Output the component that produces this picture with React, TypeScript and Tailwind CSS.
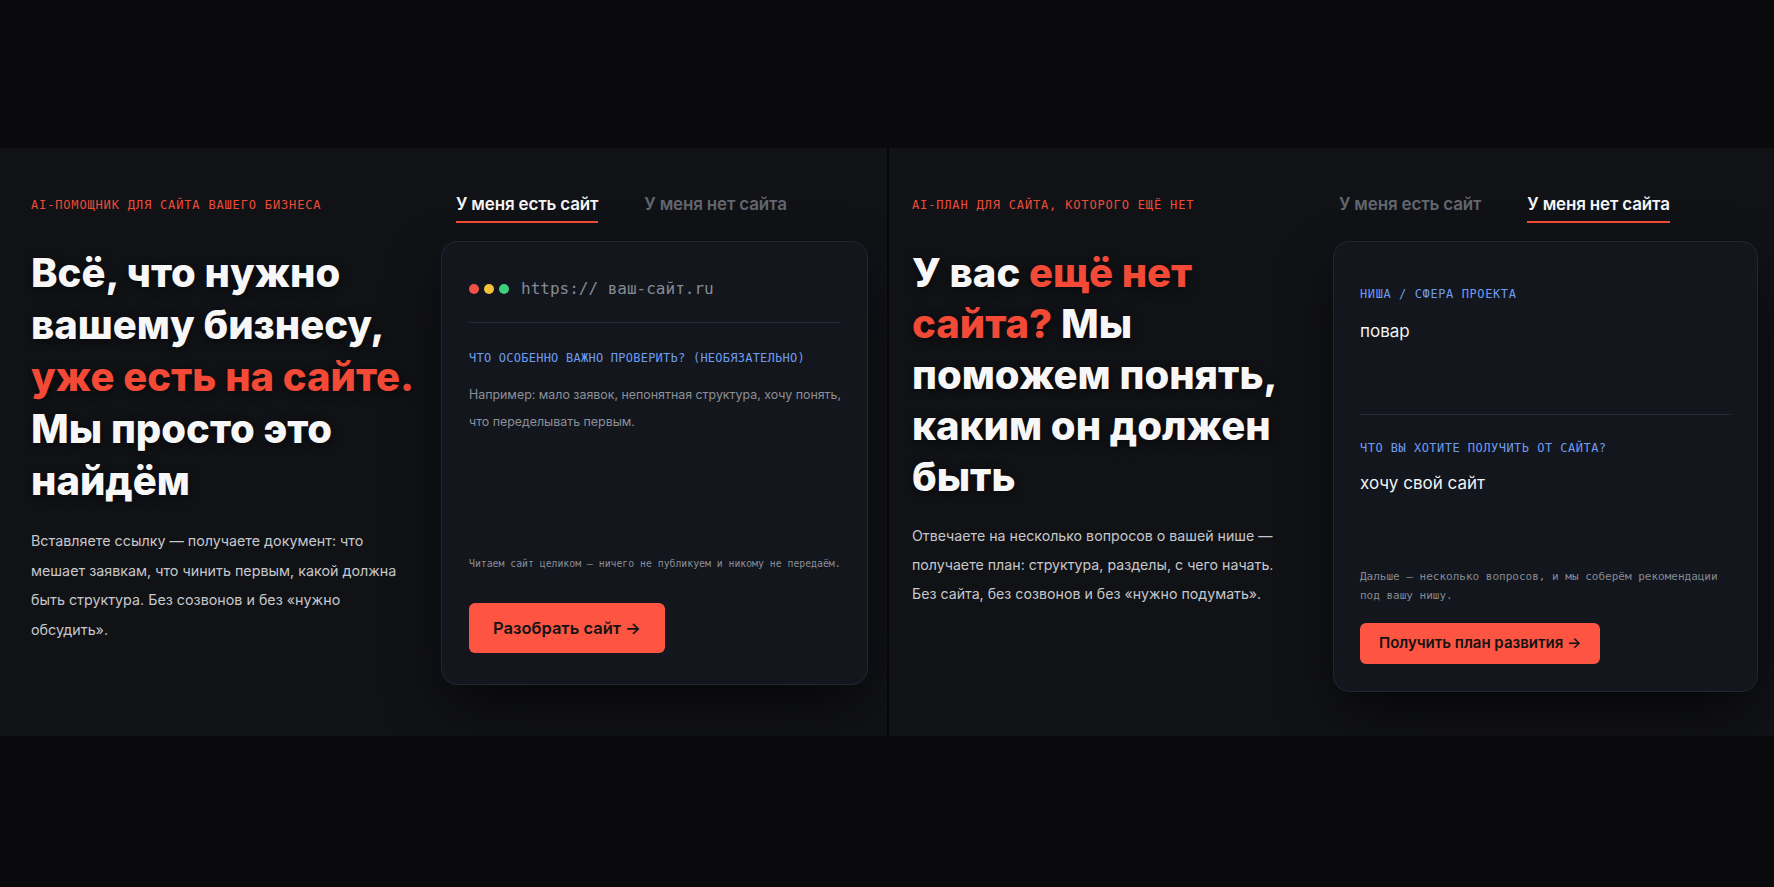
import React from "react";

const mono = "font-['DejaVu_Sans_Mono','Liberation_Mono',monospace]";
const sans = "font-['Inter','Noto_Sans',sans-serif]";

const tabLabels = ["У меня есть сайт", "У меня нет сайта"];

function Tabs({ active, offset }: { active: number; offset: string }) {
  return (
    <div className={`flex gap-[46px] ${offset}`}>
      {tabLabels.map((label, i) => (
        <div
          key={label}
          className={`border-b-2 pb-[5px] text-[17px] font-semibold leading-6 tracking-[-0.01em] ${
            i === active ? "border-[#f04a36] text-[#f4f4f5]" : "border-transparent text-[#62666f]"
          }`}
        >
          {label}
        </div>
      ))}
    </div>
  );
}

function Eyebrow({ children }: { children: React.ReactNode }) {
  return (
    <p className={`${mono} text-[12px] leading-4 tracking-[0.07em] text-[#f04a36]`}>{children}</p>
  );
}

function HasSitePanel() {
  return (
    <section className="flex h-full w-[887px] bg-[#111216]">
      <div className="w-[441px] pl-[31px] pt-[49px]">
        <Eyebrow>AI-ПОМОЩНИК ДЛЯ САЙТА ВАШЕГО БИЗНЕСА</Eyebrow>
        <h1 className="mt-[34px] text-[40px] font-extrabold leading-[52px] text-[#f7f7f8] [text-shadow:0_2px_10px_rgba(0,0,0,0.6)]">
          <span className="block">Всё, что нужно</span>
          <span className="block">вашему бизнесу,</span>
          <span className="block text-[#f24a37]">уже есть на сайте.</span>
          <span className="block">Мы просто это</span>
          <span className="block">найдём</span>
        </h1>
        <p className="mt-[19px] text-[14.3px] leading-[29.5px] text-[#c6c7cc]">
          Вставляете ссылку — получаете документ: что
          <br />
          мешает заявкам, что чинить первым, какой должна
          <br />
          быть структура. Без созвонов и без «нужно
          <br />
          обсудить».
        </p>
      </div>

      <div className="w-[427px] pt-[44px]">
        <Tabs active={0} offset="pl-[15px]" />
        <div className="mt-[18px] rounded-2xl border border-[#232731] bg-[#13161d] px-[27px] pb-[31px] pt-[35px] shadow-[0_24px_60px_-10px_rgba(0,0,0,0.75)]">
          <div className="flex items-center">
            <span className="h-[10px] w-[10px] rounded-full bg-[#f0524a]" />
            <span className="ml-[5px] h-[10px] w-[10px] rounded-full bg-[#f4c236]" />
            <span className="ml-[5px] h-[10px] w-[10px] rounded-full bg-[#3ccf7e]" />
            <span className={`${mono} ml-[12px] text-[16px] leading-6 text-[#858a93]`}>https:// ваш-сайт.ru</span>
          </div>
          <div className="mt-[21px] h-px bg-[#262a33]" />
          <p className={`${mono} mt-[27px] text-[12px] leading-4 tracking-[0.02em] text-[#6e9cf0]`}>
            ЧТО ОСОБЕННО ВАЖНО ПРОВЕРИТЬ? (НЕОБЯЗАТЕЛЬНО)
          </p>
          <p className="mt-[15px] h-[160px] whitespace-nowrap text-[12.4px] leading-[27px] text-[#8c9098]">
            Например: мало заявок, непонятная структура, хочу понять,
            <br />
            что переделывать первым.
          </p>
          <p className={`${mono} mt-[15px] whitespace-nowrap text-[9.8px] leading-4 text-[#8a8e96]`}>
            Читаем сайт целиком — ничего не публикуем и никому не передаём.
          </p>
          <button
            type="button"
            className="mt-[31px] flex h-[50px] items-center rounded-md bg-[#fd5542] px-[24px] text-[16.5px] font-semibold text-[#121212]"
          >
            Разобрать сайт →
          </button>
        </div>
      </div>
    </section>
  );
}

function NoSitePanel() {
  return (
    <section className="flex h-full flex-1 bg-[#111216]">
      <div className="w-[444px] pl-[23px] pt-[49px]">
        <Eyebrow>AI-ПЛАН ДЛЯ САЙТА, КОТОРОГО ЕЩЁ НЕТ</Eyebrow>
        <h1 className="mt-[34px] text-[40px] font-extrabold leading-[51px] text-[#f7f7f8] [text-shadow:0_2px_10px_rgba(0,0,0,0.6)]">
          <span className="block">
            У вас <span className="text-[#f24a37]">ещё нет</span>
          </span>
          <span className="block">
            <span className="text-[#f24a37]">сайта?</span> Мы
          </span>
          <span className="block">поможем понять,</span>
          <span className="block">каким он должен</span>
          <span className="block">быть</span>
        </h1>
        <p className="mt-[19px] text-[14.2px] leading-[29px] text-[#c6c7cc]">
          Отвечаете на несколько вопросов о вашей нише —
          <br />
          получаете план: структура, разделы, с чего начать.
          <br />
          Без сайта, без созвонов и без «нужно подумать».
        </p>
      </div>

      <div className="w-[425px] pt-[44px]">
        <Tabs active={1} offset="pl-[6px]" />
        <div className="mt-[18px] rounded-2xl border border-[#232731] bg-[#13161d] px-[26px] pb-[27px] pt-[44px] shadow-[0_24px_60px_-10px_rgba(0,0,0,0.75)]">
          <p className={`${mono} text-[12px] leading-4 tracking-[0.05em] text-[#6e9cf0]`}>НИША / СФЕРА ПРОЕКТА</p>
          <p className="mt-[17px] h-[95px] text-[17px] leading-6 text-[#f2f2f3]">повар</p>
          <div className="h-px bg-[#262a33]" />
          <p className={`${mono} mt-[25px] text-[12px] leading-4 tracking-[0.04em] text-[#6e9cf0]`}>
            ЧТО ВЫ ХОТИТЕ ПОЛУЧИТЬ ОТ САЙТА?
          </p>
          <p className="mt-[15px] text-[17px] leading-6 text-[#f2f2f3]">хочу свой сайт</p>
          <p className={`${mono} mt-[72px] text-[11px] leading-[19px] text-[#858a92]`}>
            Дальше — несколько вопросов, и мы соберём рекомендации
            <br />
            под вашу нишу.
          </p>
          <button
            type="button"
            className="mt-[18px] flex h-[41px] items-center rounded-md bg-[#fd5542] px-[19px] text-[15px] font-semibold text-[#121212]"
          >
            Получить план развития →
          </button>
        </div>
      </div>
    </section>
  );
}

export default function App() {
  return (
    <div className={`${sans} flex h-[887px] w-full flex-col bg-[#0a0a0d]`}>
      <div className="h-[148px] shrink-0" />
      <div className="flex h-[588px] shrink-0">
        <HasSitePanel />
        <div className="w-[2px] bg-[#070709]" />
        <NoSitePanel />
      </div>
      <div className="flex-1" />
    </div>
  );
}
